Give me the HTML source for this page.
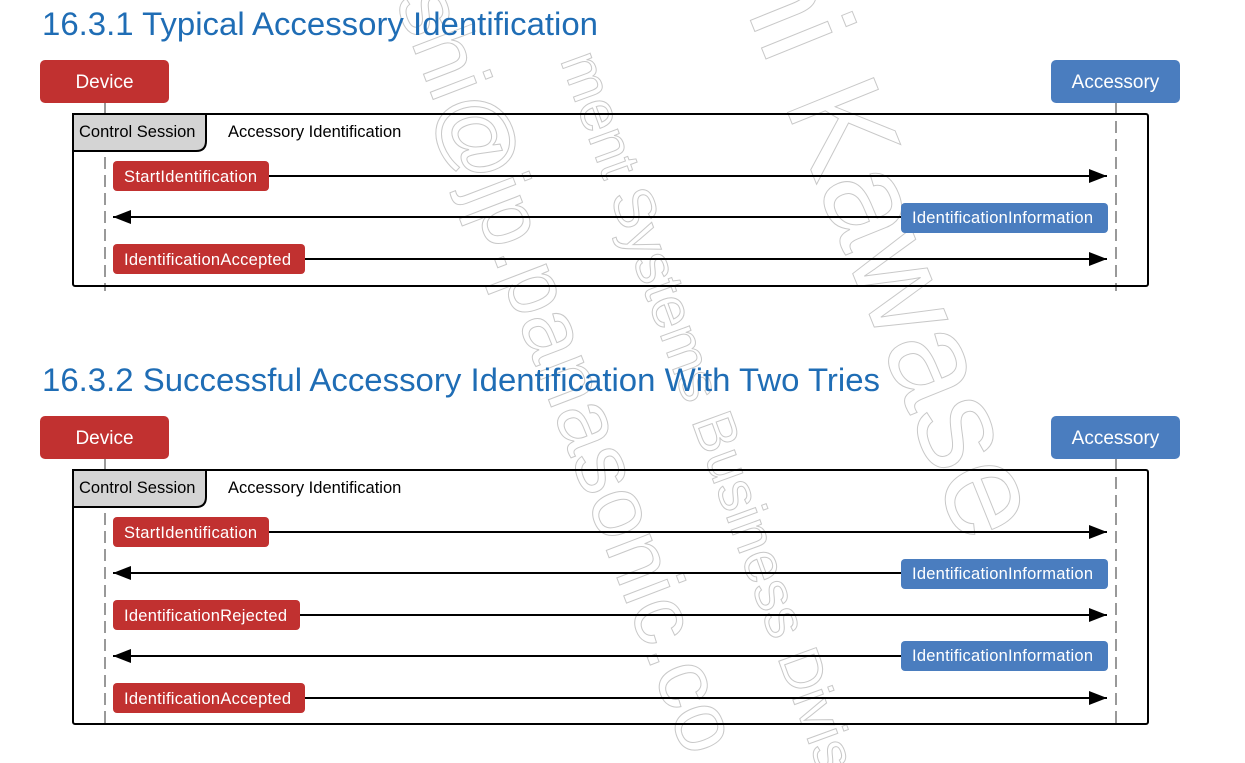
<!DOCTYPE html>
<html><head><meta charset="utf-8"><style>
html,body{margin:0;padding:0;background:#fff;width:1245px;height:763px;overflow:hidden}
svg{display:block;font-family:"Liberation Sans",sans-serif}
</style></head><body>
<svg width="1245" height="763" viewBox="0 0 1245 763" overflow="hidden">
<defs>
<marker id="ar" markerWidth="18" markerHeight="14" refX="18" refY="7" orient="auto" markerUnits="userSpaceOnUse"><path d="M0,0 L18,7 L0,14 Z" fill="#000"/></marker>
<clipPath id="cp"><rect x="0" y="0" width="1245" height="763"/></clipPath>
</defs>
<!-- watermark -->
<g fill="none" stroke="#c8c8c8" stroke-width="1" clip-path="url(#cp)">
<text transform="translate(730,-30) rotate(68)" font-size="135">hi Kawase</text>
<text transform="translate(395,0) rotate(69)" font-size="88">shi@jp.panasonic.co</text>
<text transform="translate(560,60) rotate(70)" font-size="58">ment Systems Business Divisio</text>
</g>
<text x="42" y="35" font-size="32" fill="#1f6db5" textLength="556" lengthAdjust="spacingAndGlyphs">16.3.1 Typical Accessory Identification</text>
<text x="42" y="391" font-size="32" fill="#1f6db5" textLength="838" lengthAdjust="spacingAndGlyphs">16.3.2 Successful Accessory Identification With Two Tries</text>

<!-- diagram 1 -->
<g>
<line x1="105" y1="103" x2="105" y2="291" stroke="#999" stroke-width="2" stroke-dasharray="12,6"/>
<line x1="1116" y1="103" x2="1116" y2="291" stroke="#999" stroke-width="2" stroke-dasharray="12,6"/>
<rect x="40" y="60" width="129" height="43" rx="5" fill="#c13130"/>
<text x="104.5" y="88" font-size="19" fill="#fff" text-anchor="middle">Device</text>
<rect x="1051" y="60" width="129" height="43" rx="5" fill="#4a7dbf"/>
<text x="1115.5" y="88" font-size="19" fill="#fff" text-anchor="middle">Accessory</text>
<rect x="73" y="114" width="1075" height="172" rx="2" fill="none" stroke="#000" stroke-width="2"/>
<path d="M73,114 H206 V141 Q206,151 196,151 H73 Z" fill="#d4d4d4" stroke="#000" stroke-width="2"/>
<text x="79" y="137" font-size="16.5">Control Session</text>
<text x="228" y="137" font-size="16.5">Accessory Identification</text>
<line x1="269" y1="176" x2="1107" y2="176" stroke="#000" stroke-width="2" marker-end="url(#ar)"/>
<rect x="113" y="161" width="156" height="30" rx="4" fill="#c13130"/>
<text x="124" y="182" font-size="16.5" fill="#fff" textLength="133">StartIdentification</text>
<line x1="901" y1="217" x2="113" y2="217" stroke="#000" stroke-width="2" marker-end="url(#ar)"/>
<rect x="901" y="203" width="207" height="30" rx="4" fill="#4a7dbf"/>
<text x="912" y="223" font-size="16.5" fill="#fff" textLength="181">IdentificationInformation</text>
<line x1="305" y1="259" x2="1107" y2="259" stroke="#000" stroke-width="2" marker-end="url(#ar)"/>
<rect x="113" y="244" width="192" height="30" rx="4" fill="#c13130"/>
<text x="124" y="265" font-size="16.5" fill="#fff" textLength="167">IdentificationAccepted</text>
</g>

<!-- diagram 2 -->
<g>
<line x1="105" y1="459" x2="105" y2="729" stroke="#999" stroke-width="2" stroke-dasharray="12,6"/>
<line x1="1116" y1="459" x2="1116" y2="729" stroke="#999" stroke-width="2" stroke-dasharray="12,6"/>
<rect x="40" y="416" width="129" height="43" rx="5" fill="#c13130"/>
<text x="104.5" y="444" font-size="19" fill="#fff" text-anchor="middle">Device</text>
<rect x="1051" y="416" width="129" height="43" rx="5" fill="#4a7dbf"/>
<text x="1115.5" y="444" font-size="19" fill="#fff" text-anchor="middle">Accessory</text>
<rect x="73" y="470" width="1075" height="254" rx="2" fill="none" stroke="#000" stroke-width="2"/>
<path d="M73,470 H206 V497 Q206,507 196,507 H73 Z" fill="#d4d4d4" stroke="#000" stroke-width="2"/>
<text x="79" y="493" font-size="16.5">Control Session</text>
<text x="228" y="493" font-size="16.5">Accessory Identification</text>
<line x1="269" y1="532" x2="1107" y2="532" stroke="#000" stroke-width="2" marker-end="url(#ar)"/>
<rect x="113" y="517" width="156" height="30" rx="4" fill="#c13130"/>
<text x="124" y="538" font-size="16.5" fill="#fff" textLength="133">StartIdentification</text>
<line x1="901" y1="573" x2="113" y2="573" stroke="#000" stroke-width="2" marker-end="url(#ar)"/>
<rect x="901" y="559" width="207" height="30" rx="4" fill="#4a7dbf"/>
<text x="912" y="579" font-size="16.5" fill="#fff" textLength="181">IdentificationInformation</text>
<line x1="300" y1="615" x2="1107" y2="615" stroke="#000" stroke-width="2" marker-end="url(#ar)"/>
<rect x="113" y="600" width="187" height="30" rx="4" fill="#c13130"/>
<text x="124" y="621" font-size="16.5" fill="#fff" textLength="163">IdentificationRejected</text>
<line x1="901" y1="656" x2="113" y2="656" stroke="#000" stroke-width="2" marker-end="url(#ar)"/>
<rect x="901" y="641" width="207" height="30" rx="4" fill="#4a7dbf"/>
<text x="912" y="661" font-size="16.5" fill="#fff" textLength="181">IdentificationInformation</text>
<line x1="305" y1="698" x2="1107" y2="698" stroke="#000" stroke-width="2" marker-end="url(#ar)"/>
<rect x="113" y="683" width="192" height="30" rx="4" fill="#c13130"/>
<text x="124" y="704" font-size="16.5" fill="#fff" textLength="167">IdentificationAccepted</text>
</g>
</svg>
</body></html>
